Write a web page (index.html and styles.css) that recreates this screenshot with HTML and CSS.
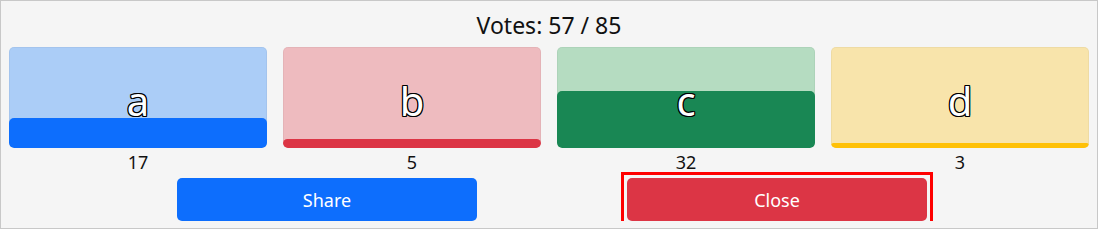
FILE: index.html
```html
<!DOCTYPE html>
<html>
<head>
<meta charset="utf-8">
<link rel="stylesheet" href="styles.css">
</head>
<body>
<div class="panel">
  <div class="title">Votes: 57 / 85</div>
  <div class="options">
    <div class="option">
      <div class="card card-a"><div class="fill fill-a" style="height:29.8%"></div><span class="label">a</span></div>
      <div class="count">17</div>
    </div>
    <div class="option">
      <div class="card card-b"><div class="fill fill-b" style="height:8.8%"></div><span class="label">b</span></div>
      <div class="count">5</div>
    </div>
    <div class="option">
      <div class="card card-c"><div class="fill fill-c" style="height:56.1%"></div><span class="label">c</span></div>
      <div class="count">32</div>
    </div>
    <div class="option">
      <div class="card card-d"><div class="fill fill-d" style="height:5.3%"></div><span class="label">d</span></div>
      <div class="count">3</div>
    </div>
  </div>
  <div class="actions">
    <button class="btn btn-share">Share</button>
    <button class="btn btn-close focused">Close</button>
  </div>
</div>
</body>
</html>
```

FILE: styles.css
```css
html, body {
  margin: 0;
  padding: 0;
}
body {
  width: 1098px;
  height: 229px;
  overflow: hidden;
  font-family: "Noto Sans", "DejaVu Sans", sans-serif;
  color: #111;
}
.panel {
  box-sizing: border-box;
  width: 1098px;
  height: 229px;
  border: 1px solid #c8c8c8;
  background: #f5f5f5;
  padding: 0 8px;
  display: flex;
  flex-direction: column;
}
.title {
  height: 46px;
  box-sizing: border-box;
  padding-top: 8px;
  text-align: center;
  font-size: 23px;
  line-height: 32px;
}
.options {
  display: grid;
  grid-template-columns: repeat(4, 1fr);
  column-gap: 16px;
}
.option {
  display: flex;
  flex-direction: column;
  align-items: stretch;
}
.card {
  position: relative;
  height: 101px;
  box-sizing: border-box;
  border-radius: 5px;
  overflow: hidden;
  display: flex;
  flex-direction: column;
  justify-content: flex-end;
  box-shadow: inset 0 0 0 1px rgba(0,0,0,0.04);
}
.card-a { background: #abcdf7; }
.card-b { background: #eebbbf; }
.card-c { background: #b5dcc1; }
.card-d { background: #f8e4ab; }
.fill {
  width: 100%;
  border-radius: 5px;
}
.fill-a { background: #0d6efd; }
.fill-b { background: #dc3545; }
.fill-c { background: #198754; }
.fill-d { background: #ffc107; }
.label {
  position: absolute;
  left: 0;
  right: 0;
  top: 0;
  bottom: 0;
  display: flex;
  align-items: center;
  justify-content: center;
  font-size: 40px;
  color: #fff;
  padding-top: 6px;
  text-shadow: -1px -1px 0 #000, 1px -1px 0 #000, -1px 1px 0 #000, 1px 1px 0 #000,
               0 -1px 0 #000, 0 1px 0 #000, -1px 0 0 #000, 1px 0 0 #000;
}
.count {
  text-align: center;
  font-size: 18px;
  line-height: 28px;
  height: 30px;
}
.actions {
  display: flex;
  justify-content: center;
  column-gap: 150px;
  margin-left: 6px;
}
.btn {
  position: relative;
  width: 300px;
  height: 43px;
  border: none;
  border-radius: 5px;
  color: #fff;
  font-family: "Noto Sans", "DejaVu Sans", sans-serif;
  font-size: 18px;
  padding: 0;
  cursor: pointer;
}
.btn-share { background: #0d6efd; }
.btn-close { background: #dc3545; }
.focused::after {
  content: "";
  position: absolute;
  left: -6px;
  right: -6px;
  top: -6px;
  bottom: 0;
  border: 3px solid #ff0000;
  border-bottom: none;
  pointer-events: none;
}
```
